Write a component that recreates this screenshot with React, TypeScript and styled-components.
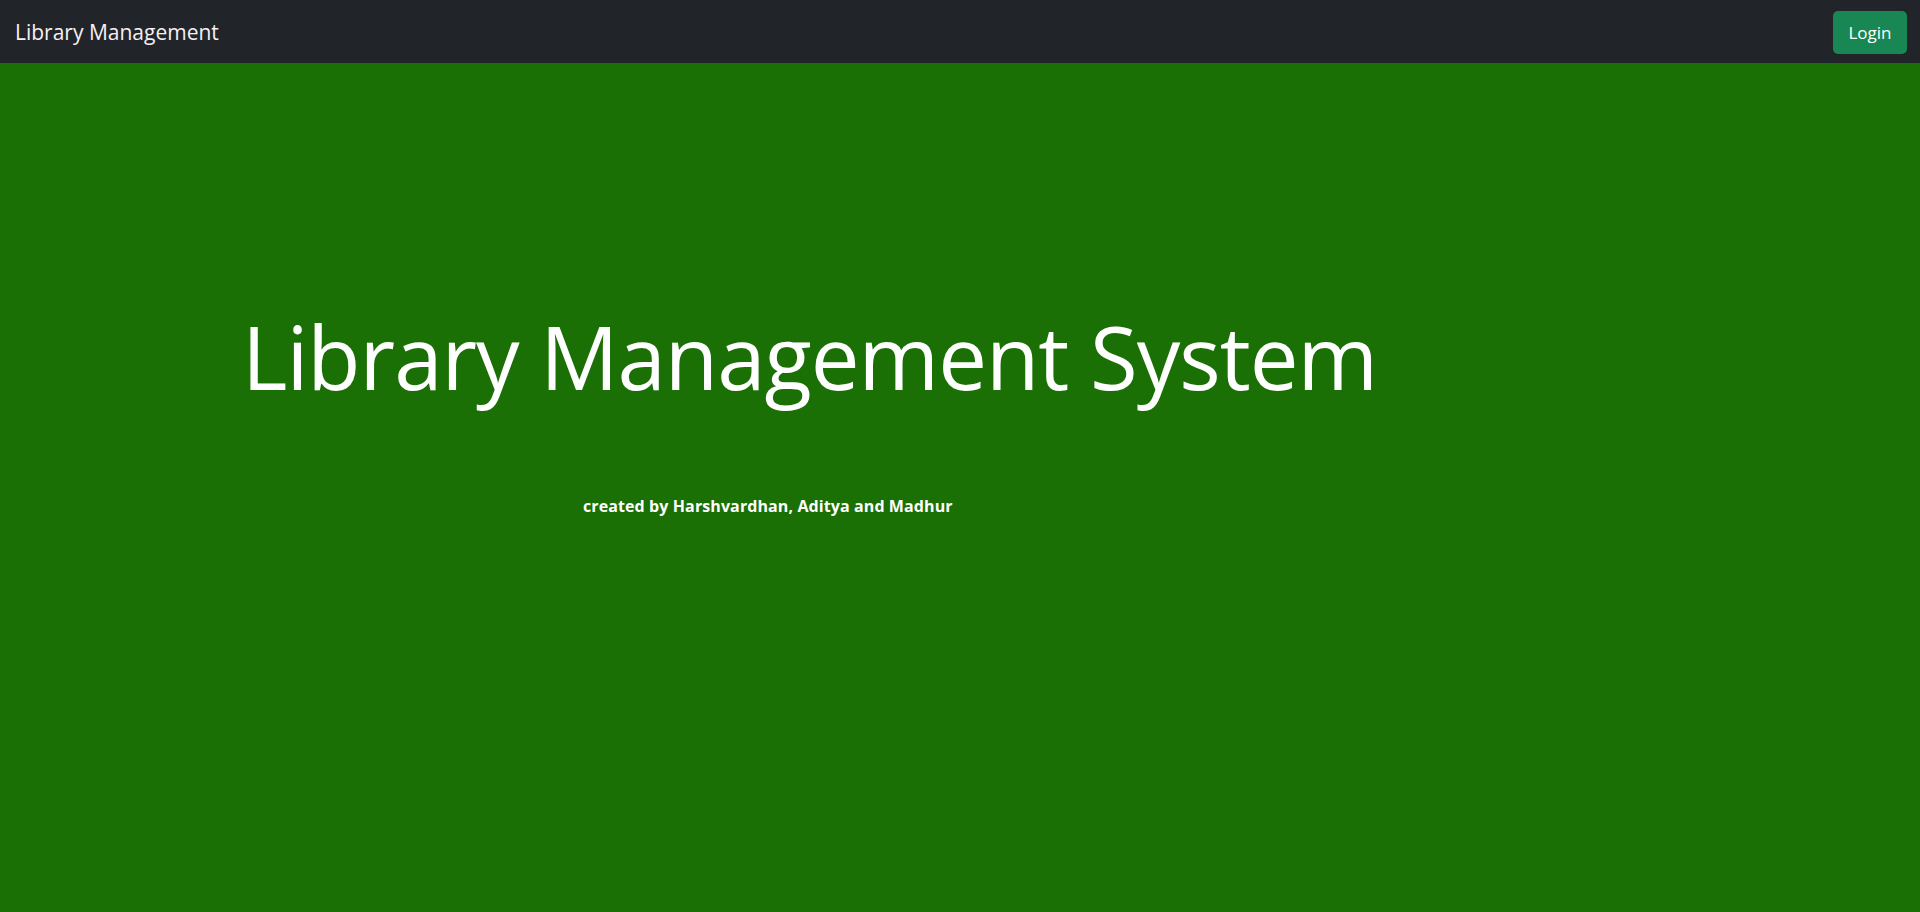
import React from 'react'
import styled, { createGlobalStyle } from 'styled-components'

const GlobalStyle = createGlobalStyle`
   html, body {
      margin: 0;
      padding: 0;
      height: 100%;
   }
   body {
      font-family: 'Open Sans', 'Noto Sans', sans-serif;
      background: #1a7004;
   }
   #root {
      min-height: 100vh;
      display: flex;
      flex-direction: column;
   }
`

const Navbar = styled.nav`
   height: 63px;
   background: #212529;
   display: flex;
   align-items: center;
   justify-content: space-between;
   padding: 0 13px 0 15px;
   box-sizing: border-box;
`

const Brand = styled.a`
   color: #f6eff4;
   font-size: 21px;
   text-decoration: none;
   line-height: 1;
   margin-top: 1px;
`

const LoginButton = styled.button`
   width: 74px;
   height: 43px;
   background: #198754;
   color: #fff;
   border: none;
   border-radius: 5px;
   font-family: inherit;
   font-size: 17px;
   margin-top: 1px;
   cursor: pointer;
`

const Hero = styled.main`
   flex: 1;
   background: #1a7004;
   padding: 241px 0 0 242px;
   color: #fff;
`

const Title = styled.h1`
   margin: 0;
   font-size: 87px;
   font-weight: 400;
   line-height: 1.2;
   letter-spacing: -1px;
`

const Credits = styled.p`
   margin: 87px 0 0 341px;
   font-size: 16px;
   font-weight: 700;
   letter-spacing: 0.1px;
`

export default function App() {
   return (
      <>
         <GlobalStyle />
         <Navbar>
            <Brand href="#">Library Management</Brand>
            <LoginButton>Login</LoginButton>
         </Navbar>
         <Hero>
            <Title>Library Management System</Title>
            <Credits>created by Harshvardhan, Aditya and Madhur</Credits>
         </Hero>
      </>
   )
}
